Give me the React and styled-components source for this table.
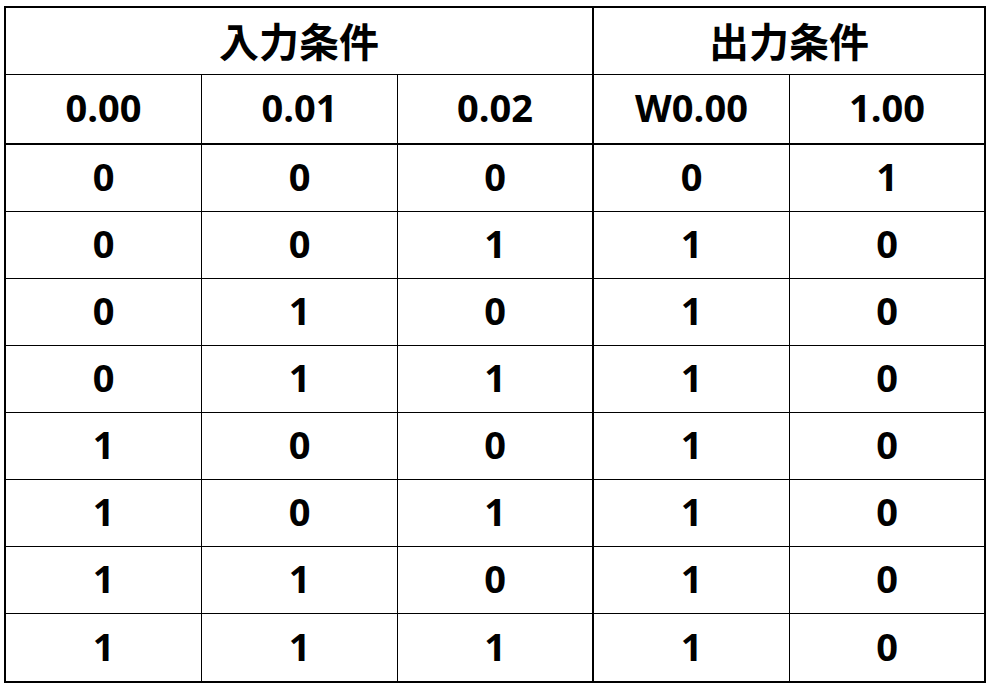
import React from "react";
import styled, { createGlobalStyle } from "styled-components";

const Global = createGlobalStyle`
  html, body { margin: 0; padding: 0; background: #ffffff; }
  body { font-family: "Open Sans", "Noto Sans CJK JP", sans-serif; }
`;

const Page = styled.div`
  padding: 6px 0 0 4px;
`;

const Grid = styled.div`
  display: grid;
  grid-template-columns: repeat(5, 196px);
  grid-template-rows: 67px 70px repeat(7, 67px) 69px;
  width: max-content;
  border-top: 2px solid #000;
  border-left: 2px solid #000;
  background: #fff;
`;

const Cell = styled.div`
  box-sizing: border-box;
  display: flex;
  align-items: center;
  justify-content: center;
  grid-column: ${(p) => p.$span || "auto"};
  border-right: ${(p) => (p.$thickRight ? 2 : 1)}px solid #000;
  border-bottom: ${(p) => (p.$thickBottom ? 2 : 1)}px solid #000;
  padding-bottom: ${(p) => (p.$cjk ? "3px" : "4px")};
  font-family: ${(p) =>
    p.$cjk
      ? `"Noto Sans CJK JP", sans-serif`
      : `"Open Sans", "Noto Sans CJK JP", sans-serif`};
  font-weight: 700;
  font-size: ${(p) => (p.$cjk ? "40px" : "38px")};
  color: #000;
  line-height: 1;
`;

const heads = ["0.00", "0.01", "0.02", "W0.00", "1.00"];
const rows = [
  [0, 0, 0, 0, 1],
  [0, 0, 1, 1, 0],
  [0, 1, 0, 1, 0],
  [0, 1, 1, 1, 0],
  [1, 0, 0, 1, 0],
  [1, 0, 1, 1, 0],
  [1, 1, 0, 1, 0],
  [1, 1, 1, 1, 0],
];

export default function App() {
  return (
    <Page>
      <Global />
      <Grid>
        <Cell $cjk $span="1 / span 3" $thickRight>
          入力条件
        </Cell>
        <Cell $cjk $span="4 / span 2" $thickRight>
          出力条件
        </Cell>
        {heads.map((h, i) => (
          <Cell key={h} $thickBottom $thickRight={i === 2 || i === 4}>
            {h}
          </Cell>
        ))}
        {rows.map((r, ri) =>
          r.map((v, ci) => (
            <Cell
              key={`${ri}-${ci}`}
              $thickRight={ci === 2 || ci === 4}
              $thickBottom={ri === rows.length - 1}
            >
              {v}
            </Cell>
          ))
        )}
      </Grid>
    </Page>
  );
}
